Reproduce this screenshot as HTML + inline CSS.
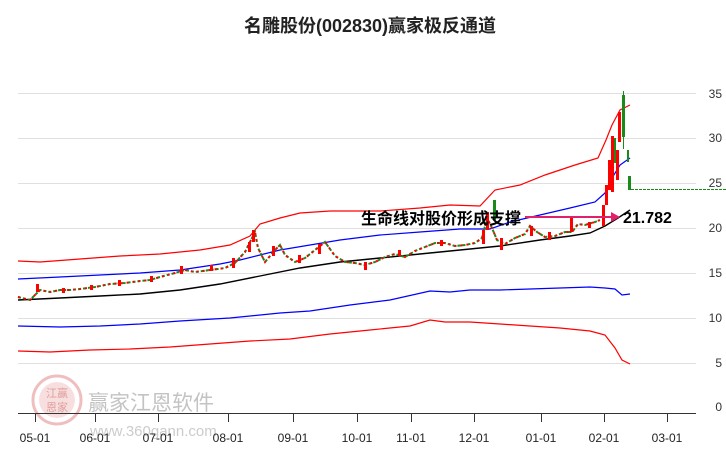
<!DOCTYPE html>
<html><head><meta charset="utf-8"><style>
body{margin:0;background:#fff;width:726px;height:450px;overflow:hidden;font-family:"Liberation Sans","Noto Sans CJK SC",sans-serif}
</style></head><body>
<svg width="726" height="450" xmlns="http://www.w3.org/2000/svg" style="position:absolute;left:0;top:0">
<text x="370" y="32" text-anchor="middle" font-size="18" font-weight="bold" fill="#222" font-family="Liberation Sans,Noto Sans CJK SC,sans-serif">名雕股份(002830)赢家极反通道</text>
<g stroke="#e0e0e0" stroke-width="1">
<line x1="18" y1="93.5" x2="696" y2="93.5"/><line x1="18" y1="138.5" x2="696" y2="138.5"/><line x1="18" y1="183.5" x2="696" y2="183.5"/><line x1="18" y1="228.5" x2="696" y2="228.5"/><line x1="18" y1="273.5" x2="696" y2="273.5"/><line x1="18" y1="318.5" x2="696" y2="318.5"/><line x1="18" y1="363.5" x2="696" y2="363.5"/>
</g>
<g font-size="12" fill="#333" text-anchor="end" font-family="Liberation Sans,sans-serif">
<text x="722" y="98">35</text><text x="722" y="142">30</text><text x="722" y="187">25</text><text x="722" y="232">20</text><text x="722" y="277">15</text><text x="722" y="322">10</text><text x="722" y="367">5</text><text x="722" y="411">0</text>
</g>
<!-- watermark -->
<g opacity="0.5">
<circle cx="57" cy="400" r="24" fill="none" stroke="#e08080" stroke-width="3"/>
<circle cx="57" cy="400" r="18" fill="#f2c0c0"/>
<text x="57" y="397" text-anchor="middle" font-size="11" fill="#c04040" font-family="Noto Sans CJK SC,sans-serif">江赢</text>
<text x="57" y="411" text-anchor="middle" font-size="11" fill="#c04040" font-family="Noto Sans CJK SC,sans-serif">恩家</text>
<text x="88" y="410" font-size="21" fill="#888" font-family="Noto Sans CJK SC,sans-serif">赢家江恩软件</text>
<text x="90" y="436" font-size="15" fill="#999" font-family="Liberation Sans,sans-serif">www.360gann.com</text>
</g>
<line x1="18" y1="413.5" x2="696" y2="413.5" stroke="#333"/>
<g stroke="#333"><line x1="35.5" y1="414" x2="35.5" y2="422"/><line x1="95.5" y1="414" x2="95.5" y2="422"/><line x1="158.5" y1="414" x2="158.5" y2="422"/><line x1="228.5" y1="414" x2="228.5" y2="422"/><line x1="293.5" y1="414" x2="293.5" y2="422"/><line x1="357.5" y1="414" x2="357.5" y2="422"/><line x1="411.5" y1="414" x2="411.5" y2="422"/><line x1="474.5" y1="414" x2="474.5" y2="422"/><line x1="541.5" y1="414" x2="541.5" y2="422"/><line x1="604.5" y1="414" x2="604.5" y2="422"/><line x1="667.5" y1="414" x2="667.5" y2="422"/></g>
<g font-size="12" fill="#222" text-anchor="middle" font-family="Liberation Sans,sans-serif">
<text x="35" y="442">05-01</text><text x="95" y="442">06-01</text><text x="158" y="442">07-01</text><text x="228" y="442">08-01</text><text x="293" y="442">09-01</text><text x="357" y="442">10-01</text><text x="411" y="442">11-01</text><text x="474" y="442">12-01</text><text x="541" y="442">01-01</text><text x="604" y="442">02-01</text><text x="667" y="442">03-01</text>
</g>
<g fill="none" stroke-width="1.2">
<polyline stroke="#f00" points="18,261 40,262 80,259 120,256 160,254 200,250 230,245 250,236 260,224 280,218 300,213 330,211 380,211 420,208 450,205 480,206 495,190 520,185 545,175 575,165 598,158 606,140 612,125 620,110 630,105"/>
<polyline stroke="#00f" points="18,279 60,277 100,275 140,273 180,270 220,264 240,260 260,255 280,250 310,245 340,240 380,235 420,232 460,229 490,229 510,222 540,215 570,208 595,202 605,193 612,178 620,165 630,158"/>
<polyline stroke="#000" stroke-width="1.4" points="18,300 60,298 100,296 140,294 180,290 220,284 260,276 300,268 340,262 380,258 420,254 460,250 500,246 540,240 570,236 590,233 605,226 618,218 630,210"/>
<polyline stroke="#00f" points="18,326 60,327 100,326 140,324 180,321 230,318 280,313 310,311 350,305 390,300 430,291 450,292 470,290 500,290 530,289 560,288 590,287 605,288 615,289 622,295 630,294"/>
<polyline stroke="#f00" points="18,351 50,352 90,350 130,349 170,347 210,344 250,341 290,339 330,334 370,330 410,326 430,320 445,322 470,322 500,324 530,326 560,328 590,331 605,335 615,348 622,360 630,364"/>
</g>
<polyline fill="none" stroke="#1a8a1a" stroke-width="2" stroke-dasharray="3,2" points="18,297 30,300 40,290 50,292 60,290 70,290 80,289 95,287 110,284 125,283 140,281 150,280 160,277 175,273 185,270 195,272 210,270 225,268 235,263 245,252 255,232 258,248 265,262 275,250 280,245 285,255 295,262 305,258 315,250 325,242 335,256 345,262 355,263 365,265 375,262 385,257 395,254 405,257 415,251 425,247 435,243 445,243 455,246 465,245 475,243 482,238 487,218 492,228 497,240 505,244 515,238 525,234 530,226 537,232 545,237 555,236 565,232 572,232 578,224 585,225 595,222 600,220"/>
<polyline fill="none" stroke="#f00" stroke-width="2" stroke-dasharray="2,4" points="18,297 30,300 40,290 50,292 60,290 70,290 80,289 95,287 110,284 125,283 140,281 150,280 160,277 175,273 185,270 195,272 210,270 225,268 235,263 245,252 255,232 258,248 265,262 275,250 280,245 285,255 295,262 305,258 315,250 325,242 335,256 345,262 355,263 365,265 375,262 385,257 395,254 405,257 415,251 425,247 435,243 445,243 455,246 465,245 475,243 482,238 487,218 492,228 497,240 505,244 515,238 525,234 530,226 537,232 545,237 555,236 565,232 572,232 578,224 585,225 595,222 600,220"/>
<g fill="#f00">
<rect x="36" y="284" width="3" height="8"/><rect x="62" y="288" width="3" height="5"/><rect x="90" y="285" width="3" height="5"/><rect x="118" y="280" width="3" height="6"/><rect x="150" y="276" width="3" height="6"/><rect x="180" y="266" width="3" height="8"/><rect x="210" y="265" width="3" height="6"/><rect x="232" y="258" width="3" height="10"/><rect x="248" y="242" width="3" height="10"/><rect x="252" y="230" width="3" height="12"/><rect x="272" y="246" width="3" height="10"/><rect x="298" y="255" width="3" height="8"/><rect x="318" y="244" width="3" height="10"/><rect x="364" y="262" width="3" height="8"/><rect x="398" y="250" width="3" height="6"/><rect x="440" y="240" width="3" height="6"/><rect x="482" y="230" width="3" height="14"/><rect x="486" y="212" width="3" height="18"/><rect x="500" y="238" width="3" height="12"/><rect x="530" y="226" width="3" height="10"/><rect x="548" y="232" width="3" height="8"/><rect x="570" y="216" width="3" height="16"/><rect x="588" y="222" width="3" height="6"/><rect x="602" y="205" width="3" height="21"/><rect x="605" y="185" width="3" height="20"/><rect x="608" y="160" width="3" height="30"/><rect x="611" y="136" width="3" height="56"/><rect x="616" y="150" width="3" height="30"/><rect x="618" y="112" width="3" height="30"/>
</g>
<g fill="#1a8a1a">
<rect x="614" y="138" width="2" height="25"/><rect x="622" y="95" width="3" height="42"/><rect x="623" y="91" width="1" height="58"/><rect x="627" y="150" width="2" height="12"/><rect x="628" y="176" width="3" height="14"/><rect x="493" y="200" width="3" height="20"/>
</g>
<line x1="631" y1="189.5" x2="726" y2="189.5" stroke="#1a8a1a" stroke-dasharray="3,1"/>
<text x="361" y="224" font-size="16" font-weight="bold" fill="#000" font-family="Noto Sans CJK SC,sans-serif">生命线对股价形成支撑</text>
<line x1="525" y1="217" x2="614" y2="217" stroke="#e0206a" stroke-width="2"/>
<polygon points="611,212 620,217 611,222" fill="#e0206a"/>
<text x="623" y="223" font-size="16" font-weight="bold" fill="#000" font-family="Liberation Sans,sans-serif">21.782</text>
</svg>
</body></html>
